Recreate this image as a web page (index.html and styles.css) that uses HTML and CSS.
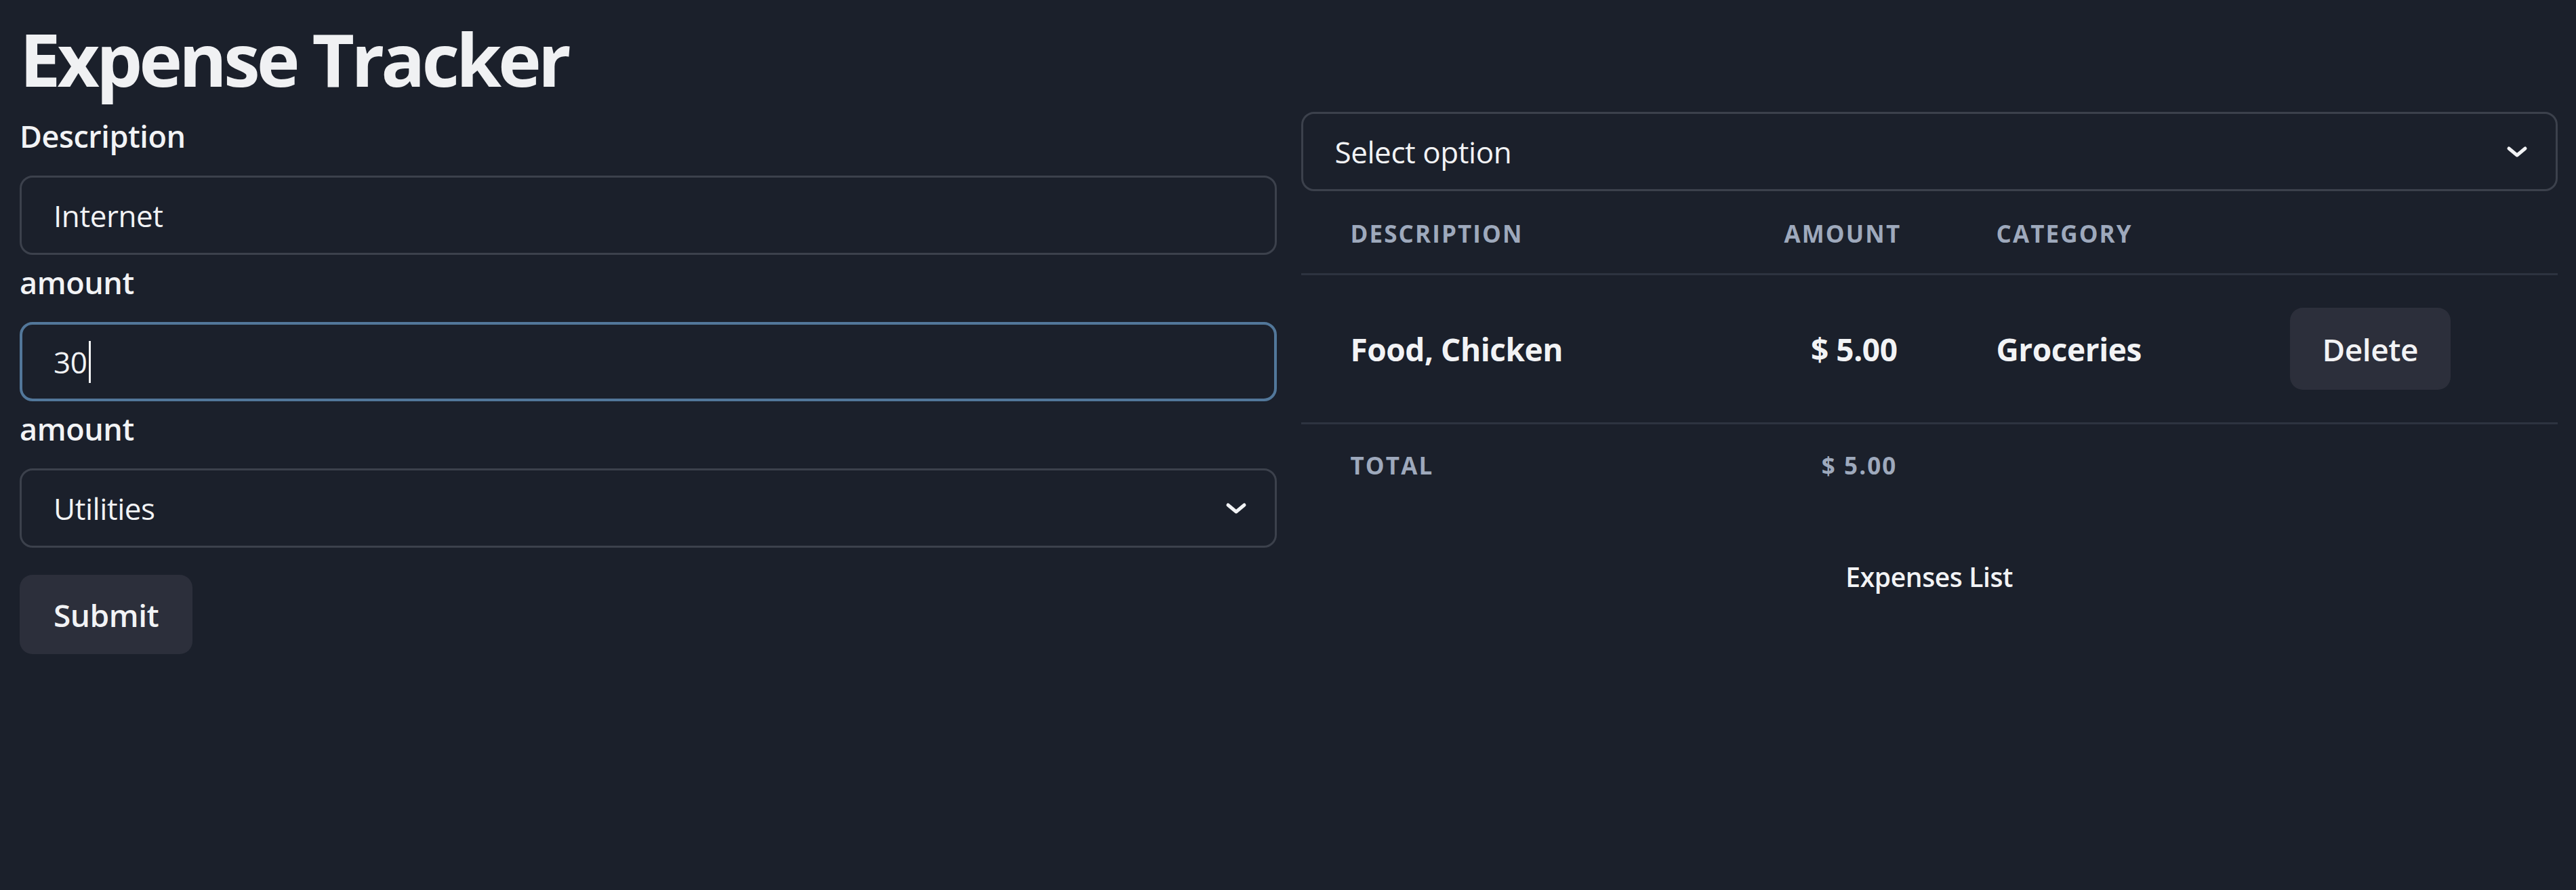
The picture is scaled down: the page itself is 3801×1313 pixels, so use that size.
FILE: index.html
```html
<!DOCTYPE html>
<html lang="en">
<head>
<meta charset="utf-8">
<title>Expense Tracker</title>
<link rel="stylesheet" href="styles.css">
</head>
<body>
<main class="page">
  <h1 class="title">Expense Tracker</h1>
  <div class="columns">
    <form class="form">
      <label class="field-label" for="desc">Description</label>
      <input id="desc" class="field" type="text" value="Internet">
      <label class="field-label" for="amount">amount</label>
      <div class="focus-wrap">
        <input id="amount" class="field field-focus" type="text" value="30"><span class="caret"></span>
      </div>
      <label class="field-label" for="cat">amount</label>
      <div class="select-wrap">
        <select id="cat" class="field select"><option>Utilities</option></select>
        <svg class="chevron" viewBox="0 0 32 18" width="32" height="18"><polyline points="4,4 16,14 28,4" fill="none" stroke="#f2f3f5" stroke-width="5" stroke-linecap="round" stroke-linejoin="round"/></svg>
      </div>
      <button type="button" class="btn submit">Submit</button>
    </form>
    <section class="list">
      <div class="select-wrap">
        <select class="field select"><option>Select option</option></select>
        <svg class="chevron" viewBox="0 0 32 18" width="32" height="18"><polyline points="4,4 16,14 28,4" fill="none" stroke="#f2f3f5" stroke-width="5" stroke-linecap="round" stroke-linejoin="round"/></svg>
      </div>
      <table class="table">
        <caption>Expenses List</caption>
        <colgroup>
          <col class="col-desc"><col class="col-amount"><col class="col-cat"><col class="col-action">
        </colgroup>
        <thead>
          <tr><th>Description</th><th class="num">Amount</th><th>Category</th><th></th></tr>
        </thead>
        <tbody>
          <tr><td>Food, Chicken</td><td class="num">$ 5.00</td><td>Groceries</td><td><button type="button" class="btn">Delete</button></td></tr>
        </tbody>
        <tfoot>
          <tr><td>Total</td><td class="num">$ 5.00</td><td></td><td></td></tr>
        </tfoot>
      </table>
    </section>
  </div>
</main>
</body>
</html>
```
FILE: styles.css
```css
html, body {
  margin: 0;
  background: #1b202b;
}
body {
  color: #f2f3f5;
  font-family: "Open Sans", "Noto Sans", sans-serif;
}
.page {
  padding: 0 27px 0 29px;
}
.title {
  margin: 0;
  padding-top: 14px;
  font-size: 108px;
  line-height: 146px;
  font-weight: 700;
  letter-spacing: -5px;
  color: #f0f1f3;
}
.columns {
  display: grid;
  grid-template-columns: 1fr 1fr;
  gap: 36px;
  align-items: start;
}
.form {
  display: flex;
  flex-direction: column;
}
.field-label {
  display: block;
  box-sizing: border-box;
  height: 99px;
  padding-top: 10px;
  font-size: 45px;
  line-height: 62px;
  font-weight: 600;
  letter-spacing: -0.01em;
}
.field {
  display: block;
  box-sizing: border-box;
  width: 100%;
  height: 117px;
  margin: 0;
  padding: 0 47px;
  border: 3px solid #3c414c;
  border-radius: 19px;
  background: #1b202b;
  color: #f2f3f5;
  font-family: "Open Sans", "Noto Sans", sans-serif;
  font-size: 44px;
  font-weight: 400;
  letter-spacing: -0.01em;
  outline: none;
}
.focus-wrap {
  position: relative;
}
.field-focus {
  border: 4px solid #52779a;
  padding-left: 46px;
}
.caret {
  position: absolute;
  left: 102px;
  top: 28px;
  width: 3px;
  height: 62px;
  background: #f2f3f5;
}
.select-wrap {
  position: relative;
}
.select {
  appearance: none;
  -webkit-appearance: none;
}
.chevron {
  position: absolute;
  right: 44px;
  top: 50%;
  transform: translateY(-50%);
  pointer-events: none;
}
.btn {
  height: 121px;
  padding: 0 48px;
  border: none;
  border-radius: 19px;
  background: #2c2f3b;
  color: #f2f3f5;
  font-family: "Open Sans", "Noto Sans", sans-serif;
  font-size: 46px;
  font-weight: 600;
  letter-spacing: -0.01em;
}
.submit {
  align-self: flex-start;
  height: 117px;
  margin-top: 40px;
  padding: 0 50px;
}
.list {
  padding-top: 5px;
}
.table {
  width: 100%;
  border-collapse: collapse;
  table-layout: fixed;
}
.col-desc { width: 640px; }
.col-amount { width: 313px; }
.col-cat { width: 433px; }
.table th,
.table td {
  padding: 0 73px;
  text-align: left;
  vertical-align: middle;
  white-space: nowrap;
}
.table .num {
  text-align: right;
}
.table th {
  height: 118px;
  padding-top: 3px;
  font-size: 35px;
  font-weight: 700;
  letter-spacing: 0.06em;
  text-transform: uppercase;
  color: #9ea9bc;
  border-bottom: 3px solid #2d3340;
}
.table tbody td {
  height: 217px;
  font-size: 46px;
  font-weight: 700;
  letter-spacing: -0.01em;
  border-bottom: 3px solid #2d3340;
}
.table tfoot td {
  height: 120px;
  font-size: 35px;
  font-weight: 700;
  letter-spacing: 0.06em;
  text-transform: uppercase;
  color: #9ea9bc;
}
.table caption {
  caption-side: bottom;
  padding-top: 76px;
  font-size: 39px;
  line-height: 58px;
  font-weight: 600;
  letter-spacing: -0.01em;
}
```
